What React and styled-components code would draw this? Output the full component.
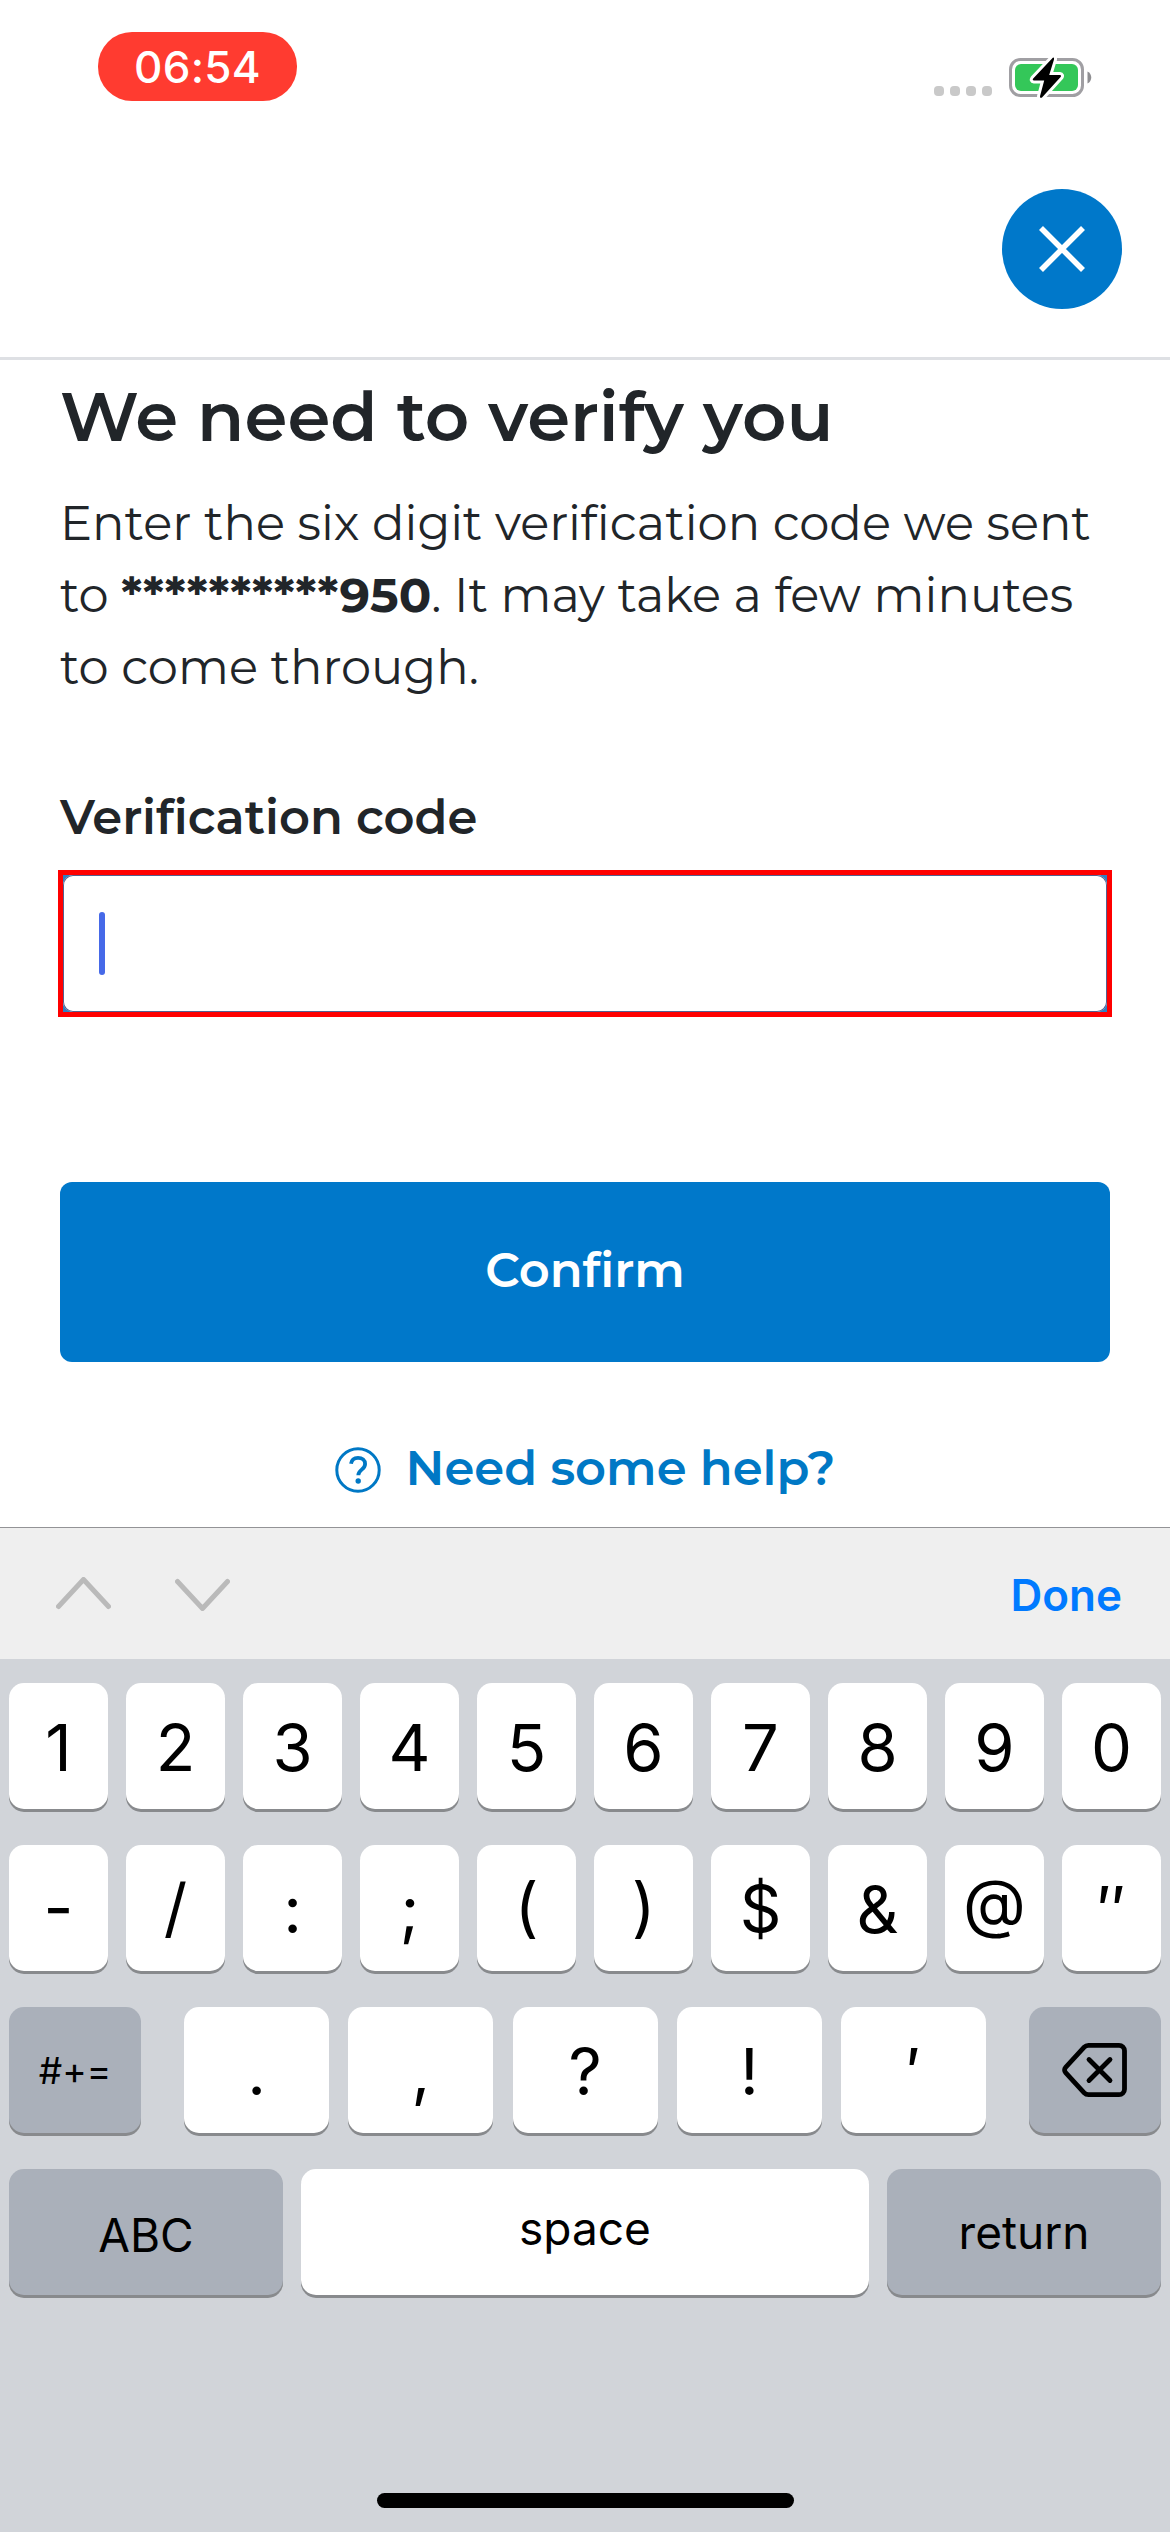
import React from "react";
import styled, { createGlobalStyle } from "styled-components";

const GlobalStyle = createGlobalStyle`
  *, *::before, *::after { box-sizing: border-box; }
  body { margin: 0; background: #fff; }
  button { border: 0; margin: 0; padding: 0; background: none; font: inherit; color: inherit; }
`;

const Screen = styled.div`
  width: 1170px;
  height: 2532px;
  display: flex;
  flex-direction: column;
  overflow: hidden;
  background: #fff;
  color: #212529;
  font-family: Montserrat, Inter, sans-serif;
`;

const StatusBar = styled.header`
  height: 141px;
  display: flex;
  justify-content: space-between;
  align-items: flex-start;
  padding: 32px 78px 0 98px;
  font-family: Inter, sans-serif;
`;

const TimePill = styled.div`
  width: 199px;
  height: 69px;
  border-radius: 34px;
  display: flex;
  align-items: center;
  justify-content: center;
  background: #ff3b30;
  color: #fff;
  font-size: 44px;
  font-weight: 500;
  letter-spacing: 0.3px;
`;

const StatusIcons = styled.div`
  display: flex;
  align-items: flex-start;
  gap: 16px;
  padding-top: 24px;
`;

const SignalDots = styled.div`
  display: flex;
  gap: 6px;
  padding-top: 30px;
`;

const Dot = styled.i`
  width: 10px;
  height: 10px;
  border-radius: 4px;
  background: #c9c9c9;
`;

const TitleBar = styled.div`
  height: 219px;
  display: flex;
  justify-content: flex-end;
  padding: 48px 48px 0;
  border-bottom: 3px solid #dee0e4;
`;

const CloseButton = styled.button`
  width: 120px;
  height: 120px;
  border-radius: 50%;
  display: grid;
  place-items: center;
  background: #0078ca;
`;

const Content = styled.main`
  height: 1167px;
  display: flex;
  flex-direction: column;
  padding: 15px 58px 0;
`;

const Heading = styled.h1`
  margin: 0 2px;
  font-size: 69px;
  line-height: 83px;
  font-weight: 600;
`;

const Message = styled.p`
  margin: 29px 2px 0;
  font-size: 48px;
  line-height: 72px;
  font-weight: 400;
  white-space: nowrap;
`;

const FieldLabel = styled.label`
  margin: 78px 2px 17px;
  font-size: 48px;
  line-height: 72px;
  font-weight: 600;
`;

const FieldHighlight = styled.div`
  width: 1054px;
  height: 147px;
  border: 5px solid #ff0000;
  background: #2f7fc0;
`;

const Field = styled.div`
  height: 100%;
  display: flex;
  align-items: center;
  padding-left: 36px;
  border-radius: 10px;
  background: #fff;
  box-shadow: inset 0 0 0 1px #54608f;
`;

const Caret = styled.span`
  width: 6px;
  height: 63px;
  border-radius: 3px;
  background: #4669e8;
`;

const ConfirmButton = styled.button`
  height: 180px;
  margin: 165px 2px 0;
  padding-bottom: 4px;
  border-radius: 12px;
  background: #0078ca;
  color: #fff;
  font-size: 48px;
  font-weight: 600;
`;

const HelpLink = styled.a`
  display: flex;
  justify-content: center;
  gap: 25px;
  margin-top: 70px;
  color: #0078c5;
  font-size: 48px;
  line-height: 72px;
  font-weight: 600;
`;

const HelpIcon = styled.svg`
  width: 46px;
  height: 46px;
  margin-top: 15px;
`;

const AccessoryBar = styled.div`
  height: 132px;
  display: flex;
  justify-content: space-between;
  align-items: center;
  padding: 0 48px 0 56px;
  border-top: 1px solid #939396;
  background: #efefef;
  font-family: Inter, sans-serif;
`;

const FieldArrows = styled.div`
  display: flex;
  gap: 64px;
`;

const DoneButton = styled.button`
  padding-top: 3px;
  color: #007aff;
  font-size: 44px;
  font-weight: 600;
`;

const Keyboard = styled.section`
  flex: 1;
  display: flex;
  flex-direction: column;
  gap: 36px;
  padding: 24px 9px 24px;
  background: #d1d4d9;
  color: #000;
  font-family: Inter, sans-serif;
`;

const KeyRow = styled.div`
  display: flex;
  justify-content: space-between;
`;

const PunctuationKeys = styled.div`
  width: 802px;
  display: flex;
  justify-content: space-between;
`;

const Key = styled.button`
  width: ${(p) => p.$width || 99}px;
  height: 126px;
  display: flex;
  align-items: center;
  justify-content: center;
  padding-top: ${(p) => p.$drop ?? 2}px;
  padding-bottom: ${(p) => p.$lift || 0}px;
  border-radius: 15px;
  background: ${(p) => (p.$dark ? "#aab0ba" : "#fff")};
  box-shadow: 0 3px 0 #888a8d;
  font-size: ${(p) => p.$size || 65}px;
  font-weight: 400;
  line-height: 1;
`;

const HomeIndicator = styled.div`
  width: 417px;
  height: 15px;
  margin: auto auto 0;
  border-radius: 8px;
  background: #000;
`;

const Battery = () => (
  <svg width="84" height="44" viewBox="0 0 84 44" fill="none">
    <rect x="2.5" y="3.5" width="72" height="36" rx="10" stroke="#a09fa3" strokeWidth="3" />
    <rect x="7" y="8" width="63" height="27" rx="6" fill="#34c759" />
    <path d="M79.5 15.5c5 2.4 5 9.6 0 12z" fill="#8e8e91" />
    <path
      d="M44.8 1.8L25.2 22.6q-1.2 1.8.8 2H36.2L32 40.2q0 2.6 2 1.2L52.6 21q1.2-1.8-.8-2H41.2L46 3.4q.4-2.4-1.2-1.6z"
      fill="#fff" stroke="#fff" strokeWidth="6" strokeLinejoin="round"
    />
    <path
      d="M44.8 1.8L25.2 22.6q-1.2 1.8.8 2H36.2L32 40.2q0 2.6 2 1.2L52.6 21q1.2-1.8-.8-2H41.2L46 3.4q.4-2.4-1.2-1.6z"
      fill="#000"
    />
  </svg>
);

const CloseIcon = () => (
  <svg width="48" height="48" viewBox="0 0 48 48" stroke="#fff" strokeWidth="5.6">
    <path d="M3 3l42 42M45 3L3 45" />
  </svg>
);

const Arrow = ({ down }) => (
  <svg
    width="55" height="34" viewBox="0 0 55 34" fill="none"
    stroke="#bababa" strokeWidth="5" strokeLinecap="round" strokeLinejoin="round"
  >
    <path d={down ? "M2.5 4.5L27.5 31.5L52.5 4.5" : "M2.5 29.5L27.5 2.5L52.5 29.5"} />
  </svg>
);

const DeleteIcon = () => (
  <svg
    width="66" height="56" viewBox="0 0 66 56" fill="none"
    stroke="#000" strokeWidth="4.8" strokeLinecap="round" strokeLinejoin="round"
  >
    <path d="M26.5 3.3H57a5.5 5.5 0 0 1 5.5 5.5V47.2a5.5 5.5 0 0 1-5.5 5.5H26.5a6 6 0 0 1-4.3-1.9L3.6 30.6a3.8 3.8 0 0 1 0-5.2L22.2 5.2a6 6 0 0 1 4.3-1.9z" />
    <path d="M27 17.5l21 21M48 17.5l-21 21" />
  </svg>
);

const DIGITS = ["1", "2", "3", "4", "5", "6", "7", "8", "9", "0"];
const SYMBOLS = ["-", "/", ":", ";", "(", ")", "$", "&", "@", "″"];
const PUNCTUATION = [".", ",", "?", "!", "′"];

// Glyphs that sit above the default position on their key.
const RAISED = { "-": 4, "/": 4, "(": 6, ")": 6, "$": 2, "@": 14 };

export default function App() {
  return (
    <Screen>
      <GlobalStyle />
      <StatusBar>
        <TimePill>06:54</TimePill>
        <StatusIcons>
          <SignalDots><Dot /><Dot /><Dot /><Dot /></SignalDots>
          <Battery />
        </StatusIcons>
      </StatusBar>
      <TitleBar>
        <CloseButton aria-label="Close"><CloseIcon /></CloseButton>
      </TitleBar>

      <Content>
        <Heading>We need to verify you</Heading>
        <Message>
          Enter the six digit verification code we sent<br />
          to <b>**********950</b>. It may take a few minutes<br />
          to come through.
        </Message>
        <FieldLabel>Verification code</FieldLabel>
        <FieldHighlight>
          <Field><Caret /></Field>
        </FieldHighlight>
        <ConfirmButton>Confirm</ConfirmButton>
        <HelpLink>
          <HelpIcon viewBox="0 0 46 46" fill="none" stroke="currentColor">
            <circle cx="23" cy="23" r="21.2" strokeWidth="3" />
            <path d="M16 16.8c.6-4 3.4-6 7-6 4.2 0 7.1 2.4 7.1 6.1 0 5.8-6.8 5.6-6.8 11.4" strokeWidth="3.8" />
            <circle cx="23.2" cy="34" r="2.7" fill="currentColor" stroke="none" />
          </HelpIcon>
          Need some help?
        </HelpLink>
      </Content>

      <AccessoryBar>
        <FieldArrows><Arrow /><Arrow down /></FieldArrows>
        <DoneButton>Done</DoneButton>
      </AccessoryBar>

      <Keyboard>
        <KeyRow>{DIGITS.map((k) => <Key key={k}>{k}</Key>)}</KeyRow>
        <KeyRow>{SYMBOLS.map((k) => <Key key={k} $lift={RAISED[k]}>{k}</Key>)}</KeyRow>
        <KeyRow>
          <Key $dark $width={132} $size={37} $drop={1}>#+=</Key>
          <PunctuationKeys>
            {PUNCTUATION.map((k) => <Key key={k} $width={145}>{k}</Key>)}
          </PunctuationKeys>
          <Key $dark $width={132} $drop={0} aria-label="Delete"><DeleteIcon /></Key>
        </KeyRow>
        <KeyRow>
          <Key $dark $width={274} $size={46} $drop={6}>ABC</Key>
          <Key $width={568} $size={46} $drop={0} $lift={8}>space</Key>
          <Key $dark $width={274} $size={46} $drop={0}>return</Key>
        </KeyRow>
        <HomeIndicator />
      </Keyboard>
    </Screen>
  );
}
